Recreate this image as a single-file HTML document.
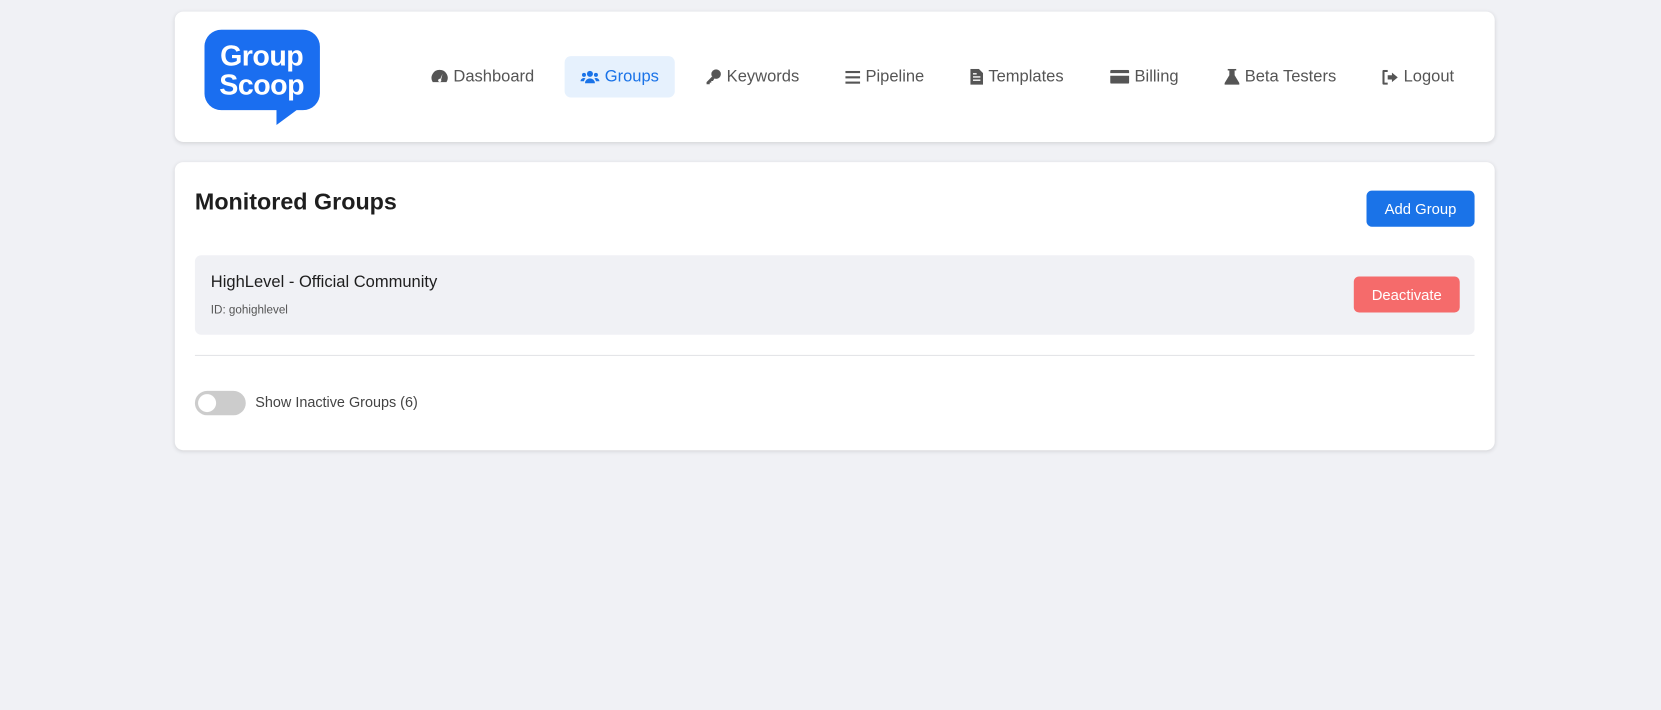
<!DOCTYPE html>
<html><head><meta charset="utf-8"><style>
*{margin:0;padding:0;box-sizing:border-box}
body{width:1661px;height:710px;background:#f0f1f5;font-family:"Liberation Sans",Arial,sans-serif;position:relative;overflow:hidden}
#w{position:absolute;left:0;top:0;width:1568px;height:670px;transform:scale(1.05931);transform-origin:0 0}
.card{position:absolute;left:165px;width:1246px;background:#fff;border-radius:8px;box-shadow:0 1px 4px rgba(0,0,0,.12)}
.nav{position:absolute;top:53px;height:39px;display:flex;align-items:center;font-size:15.6px;color:#555;white-space:nowrap}
.nav svg{margin-right:5px;fill:#555}
.act{background:#e6f1fd;border-radius:6px;color:#1a73e8;padding:0 15px}
.act svg{fill:#1a73e8}
.btn{position:absolute;color:#fff;font-size:14px;display:flex;align-items:center;justify-content:center;border-radius:5px}
</style></head><body><div id="w">
<div class="card" style="top:11px;height:123px">
  <svg style="position:absolute;left:28px;top:17px" width="110" height="91" viewBox="0 0 110 91">
    <path d="M16 0H93A16 16 0 0 1 109 16V60A16 16 0 0 1 93 76H87L68 90V76H16A16 16 0 0 1 0 60V16A16 16 0 0 1 16 0Z" fill="#1a6ef0"/>
    <text x="54" y="34" text-anchor="middle" font-family="Liberation Sans" font-weight="bold" font-size="27" letter-spacing="-0.5" fill="#fff">Group</text>
    <text x="54" y="61" text-anchor="middle" font-family="Liberation Sans" font-weight="bold" font-size="27" letter-spacing="-0.5" fill="#fff">Scoop</text>
  </svg>
</div>
<div class="nav" style="left:407px"><svg width="16" height="15" viewBox="0 0 16 15"><path d="M8 1A7.5 7.5 0 0 0 1.5 12.5H14.5A7.5 7.5 0 0 0 8 1ZM8.6 9.5L10.8 4.6 9.4 10.2A1.5 1.5 0 1 1 8.6 9.5Z"/></svg>Dashboard</div>
<div class="nav act" style="left:533px;width:104px"><svg width="19" height="14" viewBox="0 0 19 14"><circle cx="9.5" cy="3.5" r="3"/><circle cx="3.5" cy="4.5" r="2"/><circle cx="15.5" cy="4.5" r="2"/><path d="M4.5 13a5 5 0 0 1 10 0Z M0 11a3.5 3.5 0 0 1 5-3 6 6 0 0 0-1.5 3Z M19 11a3.5 3.5 0 0 0-5-3 6 6 0 0 1 1.5 3Z"/></svg>Groups</div>
<div class="nav" style="left:666px"><svg width="15" height="15" viewBox="0 0 15 15"><circle cx="10" cy="5" r="4.5"/><path d="M6 7.5L1 12.5V14.5H4V13H5.5V11.5H7L8.5 9Z"/></svg>Keywords</div>
<div class="nav" style="left:798px"><svg width="14" height="14" viewBox="0 0 14 14"><rect y="1" width="14" height="2"/><rect y="6" width="14" height="2"/><rect y="11" width="14" height="2"/></svg>Pipeline</div>
<div class="nav" style="left:916px"><svg width="12" height="15" viewBox="0 0 12 15"><path d="M0 0H8L12 4V15H0ZM2.5 7H9.5V8.3H2.5ZM2.5 10H9.5V11.3H2.5ZM2.5 4H6V5.3H2.5Z" fill-rule="evenodd"/></svg>Templates</div>
<div class="nav" style="left:1048px"><svg width="18" height="13" viewBox="0 0 18 13"><path d="M1.5 0H16.5A1.5 1.5 0 0 1 18 1.5V3H0V1.5A1.5 1.5 0 0 1 1.5 0ZM0 5.5H18V11.5A1.5 1.5 0 0 1 16.5 13H1.5A1.5 1.5 0 0 1 0 11.5Z"/></svg>Billing</div>
<div class="nav" style="left:1156px"><svg width="14" height="15" viewBox="0 0 14 15"><path d="M3 0H11V1.5H9.5V6L14 13.5V15H0V13.5L4.5 6V1.5H3Z"/></svg>Beta Testers</div>
<div class="nav" style="left:1305px"><svg width="15" height="14" viewBox="0 0 15 14"><path d="M5 0H1.5A1.5 1.5 0 0 0 0 1.5V12.5A1.5 1.5 0 0 0 1.5 14H5V12H2V2H5ZM9 2.5L14.5 7 9 11.5V9H5V5H9Z"/></svg>Logout</div>

<div class="card" style="top:153px;height:272px">
  <div style="position:absolute;left:19px;top:25px;font-size:22px;font-weight:bold;color:#1e1e1e">Monitored Groups</div>
  <div class="btn" style="left:1125px;top:27px;width:102px;height:34px;background:#1a73e8">Add Group</div>
  <div style="position:absolute;left:19px;top:88px;width:1208px;height:75px;background:#f0f1f5;border-radius:6px">
    <div style="position:absolute;left:15px;top:17px;font-size:15.6px;color:#1e1e1e">HighLevel - Official Community</div>
    <div style="position:absolute;left:15px;top:46px;font-size:11px;color:#555">ID: gohighlevel</div>
    <div class="btn" style="left:1094px;top:20px;width:100px;height:34px;background:#f56b6b">Deactivate</div>
  </div>
  <div style="position:absolute;left:19px;top:182px;width:1208px;height:1px;background:#e2e3e6"></div>
  <div style="position:absolute;left:19px;top:216px;width:48px;height:23px;background:#ccc;border-radius:12px"><div style="position:absolute;left:3px;top:3px;width:17px;height:17px;border-radius:50%;background:#fff"></div></div>
  <div style="position:absolute;left:76px;top:219px;font-size:13.6px;color:#444">Show Inactive Groups (6)</div>
</div>
</div></body></html>
